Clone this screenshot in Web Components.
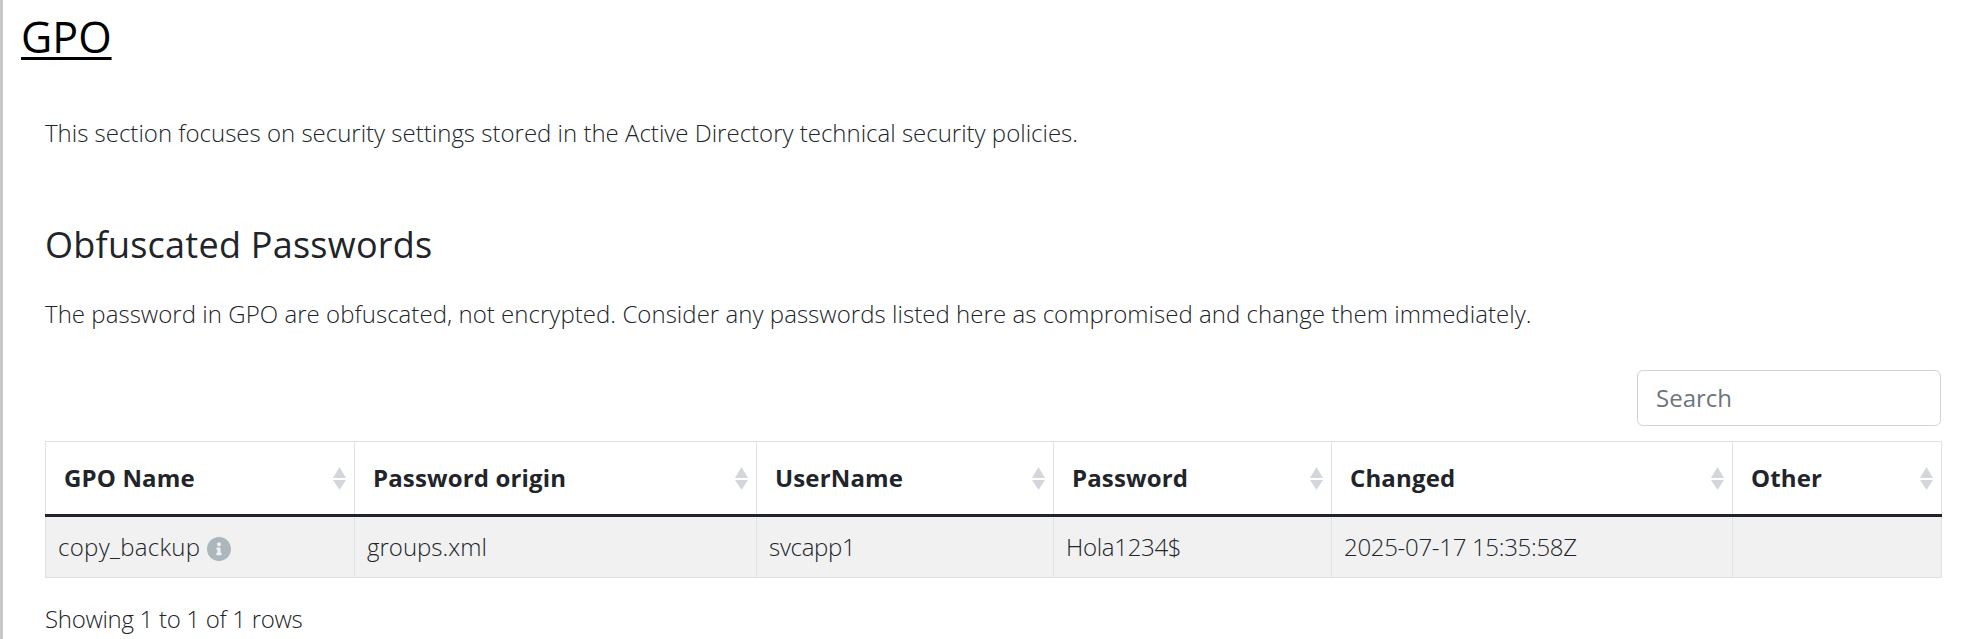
<!DOCTYPE html>
<html>
<head>
<meta charset="utf-8">
<title>GPO</title>
<style>
  html, body { margin: 0; padding: 0; background: #fff; }
  body { font-family: "Open Sans", "Liberation Sans", sans-serif; color: #212529; }
</style>
</head>
<body>
<gpo-page>
  <gpo-section heading="GPO">
    <p slot="intro">This section focuses on security settings stored in the Active Directory technical security policies.</p>
    <gpo-table
      title="Obfuscated Passwords"
      note="The password in GPO are obfuscated, not encrypted. Consider any passwords listed here as compromised and change them immediately."
      footer="Showing 1 to 1 of 1 rows"></gpo-table>
  </gpo-section>
</gpo-page>

<script>
class gpoPage extends HTMLElement {
  constructor() {
    super();
    this._shadowRoot = this.attachShadow({mode: 'open'});
    this._shadowRoot.innerHTML = `
      <style>
        :host { display: block; border-left: 3px solid #c8c8c8; height: 639px; box-sizing: border-box; overflow: hidden; }
      </style>
      <slot></slot>`;
  }
}

class gpoSection extends HTMLElement {
  constructor() {
    super();
    this._shadowRoot = this.attachShadow({mode: 'open'});
  }
  connectedCallback() {
    let heading = this.getAttribute("heading");
    this._shadowRoot.innerHTML = `
      <style>
        :host { display: block; padding: 8px 0 0 18px; }
        h1 { margin: 0; font-size: 43px; line-height: 58px; font-weight: 400; color: #000; text-decoration: underline; text-decoration-thickness: 3px; text-underline-offset: 4px; }
        .body { padding: 49px 27px 0 24px; }
        ::slotted(p) { margin: 0; font-size: 24px; line-height: 36px; font-weight: 300; }
      </style>
      <h1>${heading}</h1>
      <div class="body">
        <slot name="intro"></slot>
        <slot></slot>
      </div>`;
  }
}

class sortArrows extends HTMLElement {
  constructor() {
    super();
    this._shadowRoot = this.attachShadow({mode: 'open'});
    this._shadowRoot.innerHTML = `
      <style>
        :host { display: block; width: 13px; height: 23px; flex: none; }
        svg { display: block; }
      </style>
      <svg width="13" height="23" viewBox="0 0 13 23">
        <path d="M6.5 0L13 11H0Z" fill="#d3d6da"/>
        <path d="M0 13H13L6.5 23Z" fill="#d3d6da"/>
      </svg>`;
  }
}

class infoIcon extends HTMLElement {
  constructor() {
    super();
    this._shadowRoot = this.attachShadow({mode: 'open'});
    this._shadowRoot.innerHTML = `
      <style>
        :host { display: block; width: 24px; height: 24px; flex: none; margin-top: 5px; }
        svg { display: block; }
      </style>
      <svg width="24" height="24" viewBox="8 8 496 496">
        <path fill="#adb5bd" d="M256 8C119.043 8 8 119.083 8 256c0 136.997 111.043 248 248 248s248-111.003 248-248C504 119.083 392.957 8 256 8zm0 110c23.196 0 42 18.804 42 42s-18.804 42-42 42-42-18.804-42-42 18.804-42 42-42zm56 254c0 6.627-5.373 12-12 12h-88c-6.627 0-12-5.373-12-12v-24c0-6.627 5.373-12 12-12h12v-64h-12c-6.627 0-12-5.373-12-12v-24c0-6.627 5.373-12 12-12h64c6.627 0 12 5.373 12 12v100h12c6.627 0 12 5.373 12 12v24z"/>
      </svg>`;
  }
}

class gpoTable extends HTMLElement {
  constructor() {
    super();
    this._shadowRoot = this.attachShadow({mode: 'open'});
  }
  connectedCallback() {
    let title = this.getAttribute("title");
    let note = this.getAttribute("note");
    let footer = this.getAttribute("footer");
    let cols = [
      ["GPO Name", 309],
      ["Password origin", 402],
      ["UserName", 297],
      ["Password", 278],
      ["Changed", 401],
      ["Other", 209]
    ];
    let row = ["copy_backup", "groups.xml", "svcapp1", "Hola1234$", "2025-07-17 15:35:58Z", ""];
    this._shadowRoot.innerHTML = `
      <style>
        :host { display: block; }
        h3 { margin: 69px 0 0; font-size: 36px; line-height: 49px; font-weight: 400; letter-spacing: 0.25px; color: #212529; }
        p { margin: 27px 0 0; font-size: 24px; line-height: 36px; font-weight: 300; letter-spacing: 0.04px; }
        .toolbar { display: flex; justify-content: flex-end; margin-top: 38px; }
        input { box-sizing: border-box; width: 304px; height: 56px; padding: 0 18px 2px; border: 1px solid #ced4da; border-radius: 6px; background: #fff; font: 400 24px "Open Sans", "Liberation Sans", sans-serif; outline: none; }
        input::placeholder { color: #6c757d; opacity: 1; }
        table { border-collapse: collapse; table-layout: fixed; width: 1896px; margin-top: 15px; }
        th, td { border: 1px solid #dee2e6; padding: 0; font-size: 24px; text-align: left; }
        th { height: 72px; border-bottom: 3px solid #212529; font-weight: 700; }
        th div { display: flex; align-items: center; justify-content: space-between; padding: 0 8px 0 18px; letter-spacing: 0.15px; }
        th span { margin-bottom: 2px; }
        td { height: 60px; background: #f1f1f1; font-weight: 300; letter-spacing: -0.3px; }
        td:first-child { letter-spacing: 0.3px; }
        td:nth-child(2) { letter-spacing: 0; }
        td div { display: flex; align-items: center; gap: 7px; padding: 0 0 2px 12px; }
        .foot { margin-top: 23px; font-size: 24px; line-height: 36px; font-weight: 300; letter-spacing: -0.3px; }
      </style>
      <h3>${title}</h3>
      <p>${note}</p>
      <div class="toolbar"><input type="text" placeholder="Search"></div>
      <table>
        <colgroup>${cols.map(c => `<col style="width:${c[1]}px">`).join("")}</colgroup>
        <thead><tr>${cols.map(c => `<th><div><span>${c[0]}</span><sort-arrows></sort-arrows></div></th>`).join("")}</tr></thead>
        <tbody><tr>${row.map((t, i) => `<td><div>${t}${i == 0 ? "<info-icon></info-icon>" : ""}</div></td>`).join("")}</tr></tbody>
      </table>
      <div class="foot">${footer}</div>`;
  }
}

window.customElements.define('gpo-page', gpoPage);
window.customElements.define('gpo-section', gpoSection);
window.customElements.define('sort-arrows', sortArrows);
window.customElements.define('info-icon', infoIcon);
window.customElements.define('gpo-table', gpoTable);
</script>
</body>
</html>
